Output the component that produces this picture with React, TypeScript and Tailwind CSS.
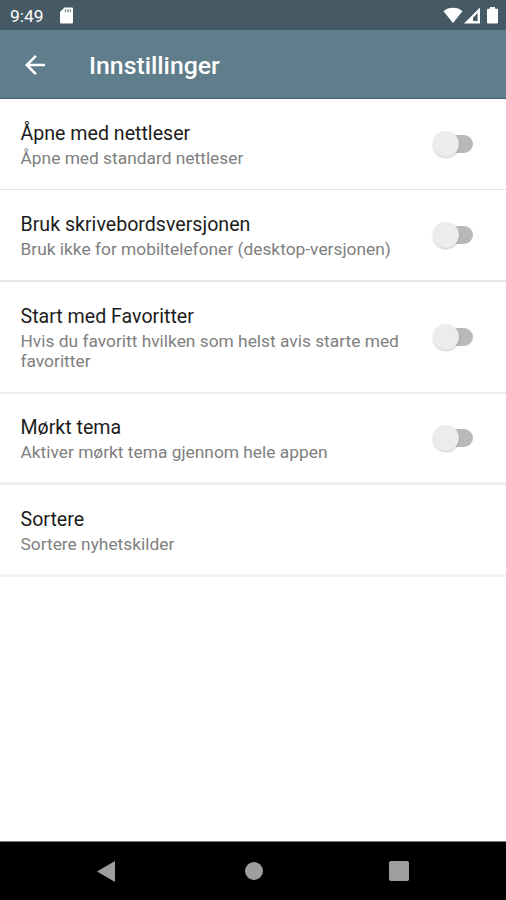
import React from "react";

type Setting = {
  title: string;
  summary: string;
  toggle: boolean;
  row: string;
  text: string;
};

const settings: Setting[] = [
  {
    title: "Åpne med nettleser",
    summary: "Åpne med standard nettleser",
    toggle: true,
    row: "h-[91px] border-b-[1.5px] border-[#e2e2e2]",
    text: "pt-px",
  },
  {
    title: "Bruk skrivebordsversjonen",
    summary: "Bruk ikke for mobiltelefoner (desktop-versjonen)",
    toggle: true,
    row: "h-[92px] border-b-2 border-[#e6e6e6]",
    text: "pt-px",
  },
  {
    title: "Start med Favoritter",
    summary: "Hvis du favoritt hvilken som helst avis starte med favoritter",
    toggle: true,
    row: "h-[112px] border-b-2 border-[#ececec]",
    text: "pt-px",
  },
  {
    title: "Mørkt tema",
    summary: "Aktiver mørkt tema gjennom hele appen",
    toggle: true,
    row: "h-[91px] border-b-[3px] border-[#f0f0f0]",
    text: "pt-px",
  },
  {
    title: "Sortere",
    summary: "Sortere nyhetskilder",
    toggle: false,
    row: "h-[92px] border-b-[3px] border-[#f2f2f2]",
    text: "pt-[3px]",
  },
];

const StatusBar = () => {
  return (
    <div className="flex h-[30px] shrink-0 items-center bg-[#455a64] pl-[10px] pr-2 text-white">
      <span className="w-[50px] pt-0.5 text-[17.4px] leading-5">9:49</span>
      <svg width="13" height="17" viewBox="0 0 13 17">
        <path d="M4.5 0.5h7.2c.8 0 1.3.5 1.3 1.3v13.4c0 .8-.5 1.3-1.3 1.3H1.3C.5 16.500 0 16 0 15.200V5z" fill="#fff" />
        <path d="M4.800 2.200h1.300v3H4.800zM7.200 2.200h1.300v3H7.200zM9.600 2.200h1.300v3H9.600z" fill="#7b8b92" />
      </svg>
      <div className="ml-auto flex items-center">
        <svg width="20" height="17" viewBox="0 0 20 17">
          <path d="M0.500 4.200C5.500-.4 14.500-.4 19.500 4.200L10 16z" fill="#fff" />
        </svg>
        <svg className="ml-px" width="16" height="17" viewBox="0 0 16 17">
          <path d="M16 0.500v16H0z" fill="#fff" />
          <path d="M13.600 6v8H9V10.800z" fill="#455a64" />
        </svg>
        <svg className="ml-[7px]" width="11" height="17" viewBox="0 0 11 17">
          <path d="M3 0h5v1.800h1.700c.8 0 1.300.5 1.300 1.300v12.100c0 .8-.5 1.300-1.300 1.300H1.300C.5 16.500 0 16 0 15.200V3.100c0-.8.5-1.300 1.300-1.300H3z" fill="#fff" />
        </svg>
      </div>
    </div>
  );
};

const AppBar = () => {
  return (
    <header className="flex h-[69px] shrink-0 items-center border-b border-[#3f6072] bg-[#607d8b] pl-[25px] text-white">
      <svg className="mt-px" width="20" height="20" viewBox="4 4 16 16" fill="#fff">
        <path d="M20 11H7.830l5.590-5.590L12 4l-8 8 8 8 1.410-1.410L7.830 13H20v-2z" />
      </svg>
      <h1 className="ml-11 pt-[3px] text-[24.8px] font-medium leading-8">Innstillinger</h1>
    </header>
  );
};

const Toggle = () => {
  return (
    <div className="flex h-[26px] w-10 shrink-0 items-center">
      <div className="z-10 size-[26px] shrink-0 rounded-full bg-[#ececec] shadow-[0_1px_2px_rgba(0,0,0,0.22)]" />
      <div className="-ml-4 h-[18px] w-[30px] shrink-0 rounded-r-full bg-[#b9b9b9]" />
    </div>
  );
};

const SettingRow = ({ title, summary, toggle, row, text }: Setting) => {
  return (
    <div className={`flex shrink-0 items-center pl-[20.5px] pr-[33px] ${row}`}>
      <div className={`flex-1 pr-3 ${text}`}>
        <div className="text-[19.6px] leading-6 text-[#1c1c1c]">{title}</div>
        <div className="mt-0.5 text-[17.35px] leading-5 text-[#808080]">{summary}</div>
      </div>
      {toggle && <Toggle />}
    </div>
  );
};

const NavBar = () => {
  return (
    <nav className="flex h-[59px] shrink-0 items-center border-t border-[#777] bg-black pl-[97px]">
      <svg width="18" height="21" viewBox="0 0 18 21">
        <path d="M18 0v21L0 10.500z" fill="#9e9e9e" />
      </svg>
      <div className="ml-[130px] size-[18px] rounded-full bg-[#9e9e9e]" />
      <div className="ml-[126px] size-[20px] rounded-[2px] bg-[#9e9e9e]" />
    </nav>
  );
};

const App = () => {
  return (
    <div className="flex h-[900px] w-[506px] flex-col overflow-hidden bg-white font-['Roboto',sans-serif]">
      <StatusBar />
      <AppBar />
      <main className="flex flex-1 flex-col">
        {settings.map((setting) => (
          <SettingRow key={setting.title} {...setting} />
        ))}
      </main>
      <NavBar />
    </div>
  );
};

export default App;
